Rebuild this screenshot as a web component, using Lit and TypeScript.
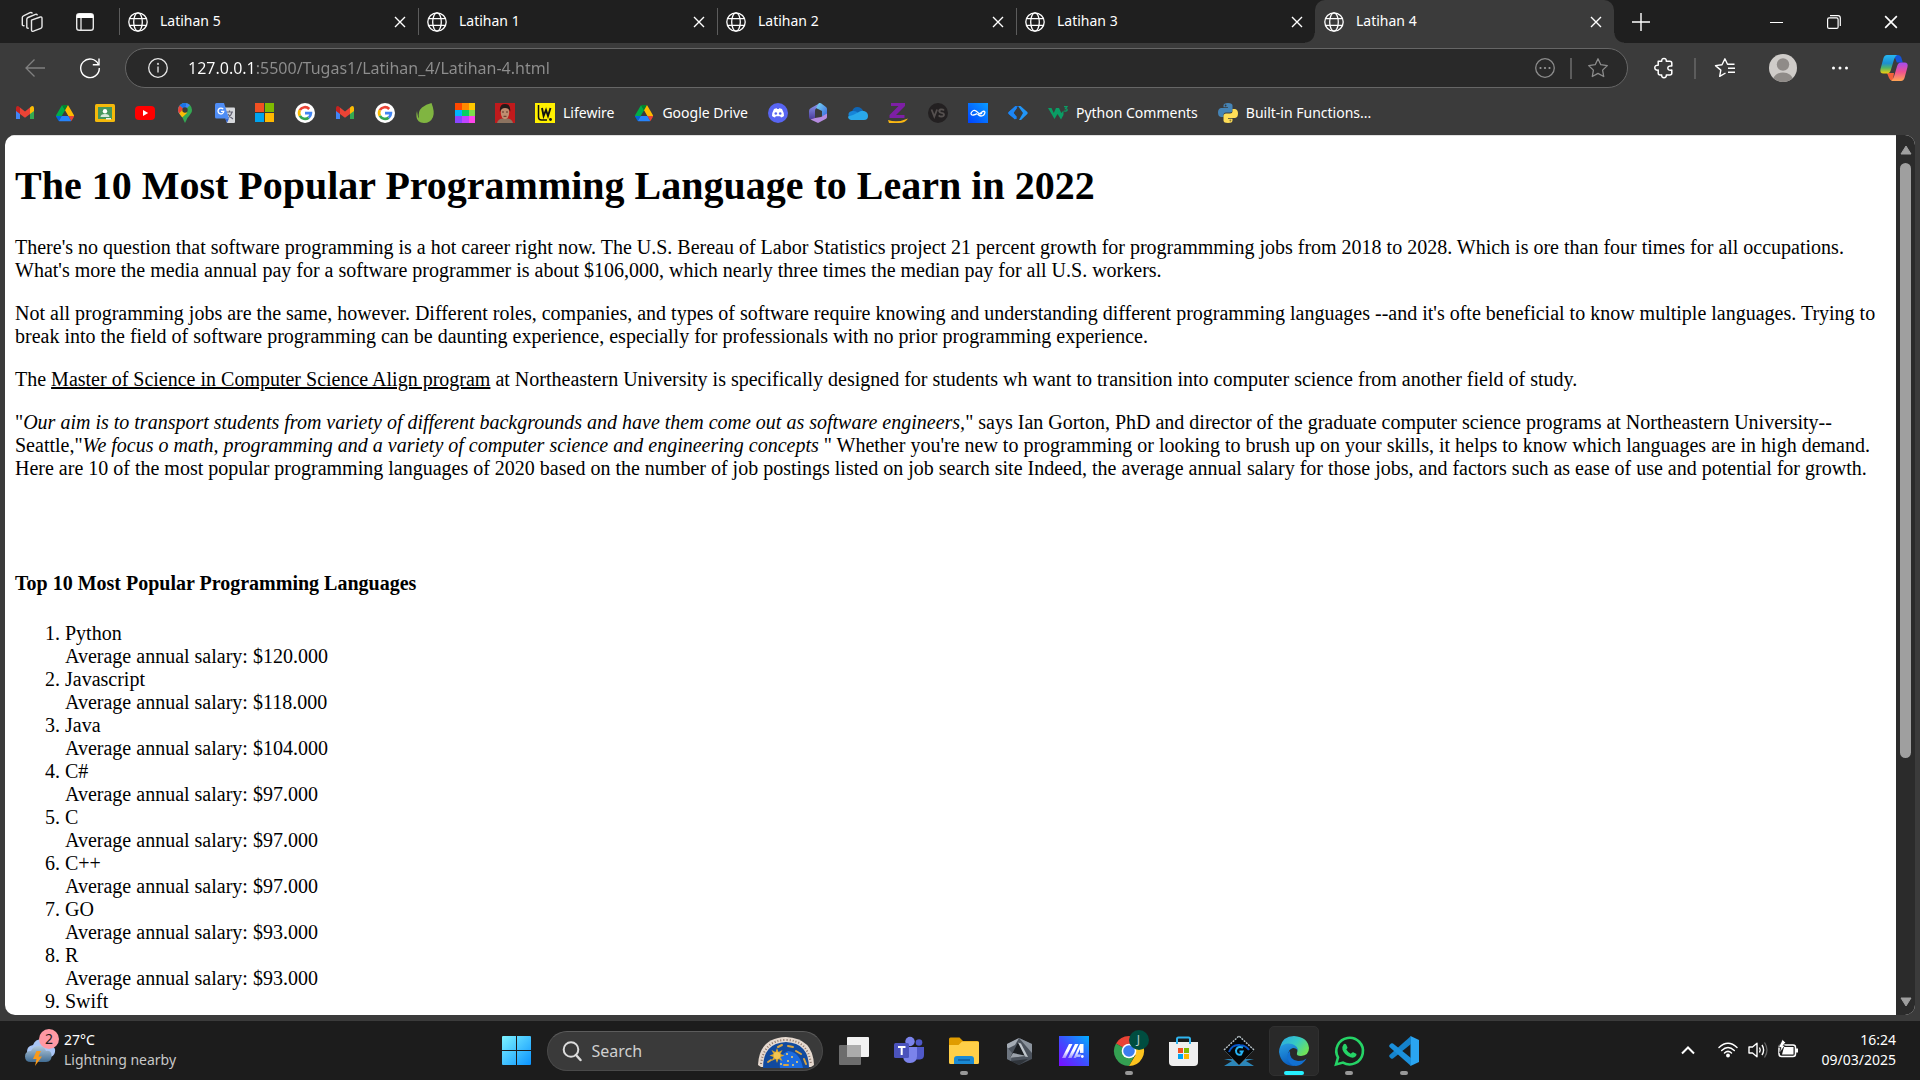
import { LitElement, html, svg, css, nothing, type TemplateResult } from "lit";
import { customElement, property } from "lit/decorators.js";
import { classMap } from "lit/directives/class-map.js";

const icon = (size: number, box: string, body: TemplateResult) =>
  html`<svg width=${size} height=${size} viewBox=${box} fill="none" aria-hidden="true">${body}</svg>`;

/* ---------- browser chrome icons ---------- */

const globe = icon(20, "0 0 20 20", svg`
  <g stroke="#fff" stroke-width="1.3"><circle cx="10" cy="10" r="9.2"/><ellipse cx="10" cy="10" rx="4.3" ry="9.2"/>
  <path d="M1.6 6.6h16.8M1.6 13.4h16.8"/></g>`);

const cross = (size: number) => icon(size, "0 0 12 12", svg`
  <path d="M1 1l10 10M11 1L1 11" stroke="#fff" stroke-width="1.4"/>`);

const workspaces = icon(22, "0 0 22 22", svg`
  <g stroke="#e8e8e8" stroke-width="1.4" stroke-linejoin="round" stroke-linecap="round">
  <path d="M10.5 9.2l8.8-3.2q1.700-.4 1.700 1.200v8.400q0 1.200-1.200 1.700l-7.300 2.900q-2 .6-2-1.200v-8.200z"/>
  <path d="M7.200 17.300q-1.400.1-1.400-1.300V8.200q0-1.200 1.200-1.700l7.500-3.200q1.200-.4 1.700.5"/>
  <path d="M3 14.800q-1.700.1-1.700-1.400V6.500q0-1.200 1.200-1.700l6.600-3.200q1.300-.5 2 .4"/></g>`);

const verticalTabs = icon(20, "0 0 20 20", svg`
  <rect x="1.7" y="1.7" width="16.6" height="16.6" rx="2.6" stroke="#e8e8e8" stroke-width="1.4"/>
  <path d="M1.7 4.3q0-2.6 2.6-2.600h11.400q2.600 0 2.600 2.600V6H1.7z" fill="#fff"/><path d="M6 6v12" stroke="#e8e8e8" stroke-width="1.3"/>`);

const plus = icon(18, "0 0 18 18", svg`<path d="M9 0v18M0 9h18" stroke="#fff" stroke-width="1.4"/>`);
const minimise = icon(14, "0 0 14 14", svg`<path d="M0 7.5h13" stroke="#fff"/>`);
const restore = icon(14, "0 0 14 14", svg`
  <g stroke="#fff" stroke-width="1.2"><rect x=".6" y="2.9" width="10.5" height="10.5" rx="1.5"/><path d="M3 .7h8q2.300 0 2.300 2.300v8"/></g>`);

const back = icon(20, "0 0 20 20", svg`
  <path d="M20 10H1M9.500 1.500L1 10l8.500 8.500" stroke="#808080" stroke-width="1.3"/>`);
const reload = icon(22, "0 0 22 22", svg`
  <path d="M19.500 7.500A9.300 9.300 0 1 0 20.300 11" stroke="#fff" stroke-width="1.4"/><path d="M20 1.500v6.300h-6.200" stroke="#fff" stroke-width="1.4"/>`);
const info = icon(20, "0 0 20 20", svg`
  <circle cx="10" cy="10" r="9.3" stroke="#e8e8e8" stroke-width="1.3"/><path d="M10 8.500v6" stroke="#c8c8c8" stroke-width="1.6"/><circle cx="10" cy="5.9" r="1.1" fill="#c8c8c8"/>`);
const circleDots = icon(20, "0 0 20 20", svg`
  <circle cx="10" cy="10" r="9.3" stroke="#8c8c8c" stroke-width="1.3"/><g fill="#9a9a9a"><circle cx="5.5" cy="10" r="1.1"/><circle cx="10" cy="10" r="1.1"/><circle cx="14.5" cy="10" r="1.1"/></g>`);
const star = icon(22, "0 0 22 22", svg`
  <path d="M11 1.800l2.800 5.900 6.500.9-4.700 4.500 1.100 6.400L11 16.400l-5.700 3.100 1.100-6.400L1.700 8.600l6.500-.9z" stroke="#8c8c8c" stroke-width="1.3" stroke-linejoin="round"/>`);
const puzzle = icon(22, "0 0 22 22", svg`
  <path d="M5.200 4.300h3.500q-.2-2.900 2.300-2.900t2.300 2.900h3.500q2 0 2 2v2.800q-4-.6-4 2t4 2v3q0 2-2 2h-3.500q.2 2.600-2.300 2.600t-2.300-2.600H7.200q-2 0-2-2v-3q-3.400.3-3.400-2.400t3.400-2.400z" stroke="#fff" stroke-width="1.5" stroke-linejoin="round"/>`);
const favourites = icon(22, "0 0 22 22", svg`
  <path d="M11.500 16l-5.800 3.300 1.100-6.200L1.500 8.600l6.500-.9L10.900 1.800l2.600 5.400h7M14 11.300h7M14 15.300h7" stroke="#fff" stroke-width="1.4" stroke-linejoin="round"/>`);
const avatar = icon(28, "0 0 28 28", svg`
  <clipPath id="av"><circle cx="14" cy="14" r="14"/></clipPath>
  <g clip-path="url(#av)"><path fill="#cfccc9" d="M0 0h28v28H0z"/><circle cx="14" cy="10.5" r="6.2" fill="#8f8b88"/><ellipse cx="14" cy="26" rx="10" ry="7.5" fill="#8f8b88"/></g>`);
const dots = icon(20, "0 0 20 20", svg`<g fill="#fff"><circle cx="3.5" cy="10" r="1.5"/><circle cx="10" cy="10" r="1.5"/><circle cx="16.5" cy="10" r="1.5"/></g>`);
const copilot = icon(28, "0 0 28 28", svg`
  <defs><linearGradient id="cpA" x1="0" y1="0" x2="0" y2="1"><stop stop-color="#26b8f2"/><stop offset=".45" stop-color="#1d8fd0"/><stop offset=".7" stop-color="#52b565"/><stop offset="1" stop-color="#f5cf0a"/></linearGradient>
  <linearGradient id="cpB" x1="0" y1="0" x2="0" y2="1"><stop stop-color="#a14cf0"/><stop offset=".5" stop-color="#ee5091"/><stop offset="1" stop-color="#ffa553"/></linearGradient></defs>
  <path d="M14 1h4q2.500 0 3.300 2.500l1.500 5h-6z" fill="#1554d8"/>
  <path d="M7 19h7l-1 7.500q-3 .2-4-2.500z" fill="#f2603a"/>
  <path d="M7 1h10q-2 1-3 4.500l-3 10Q10 19.500 7 19.500H3.500q-4 0-3-4.500L3.500 4Q4.500 1 7 1z" fill="url(#cpA)"/>
  <path d="M21 27H11q2-1 3-4.500l3-10Q18 8.500 21 8.500h3.500q4 0 3 4.500l-3 11Q23.500 27 21 27z" fill="url(#cpB)"/>`);

/* ---------- bookmark icons ---------- */

const gmail = svg`
  <path d="M1 5v11h4V9z" fill="#4285f4"/><path d="M15 9v7h4V5z" fill="#34a853"/><path d="M15 4.500V11l4-3V5q-.3-2.500-2.500-1.700z" fill="#fbbc04"/>
  <path d="M5 4.500V11L1 8V5q.3-2.500 2.500-1.700z" fill="#c5221f"/><path d="M5 4.500l5 3.900 5-3.900V11l-5 3.800L5 11z" fill="#ea4335"/>`;
const drive = svg`<g transform="translate(1 2) scale(.207)">
  <path d="M6.600 66.850l3.850 6.650c.8 1.400 1.950 2.500 3.300 3.300L27.500 53H0c0 1.550.4 3.100 1.200 4.500z" fill="#0066da"/>
  <path d="M43.650 25L29.900 1.200c-1.350.8-2.500 1.900-3.300 3.300l-25.400 44A9.060 9.060 0 0 0 0 53h27.500z" fill="#00ac47"/>
  <path d="M73.550 76.800c1.350-.8 2.500-1.900 3.300-3.300l1.600-2.750L86.100 57.500c.8-1.400 1.200-2.950 1.200-4.500H59.800l5.850 11.500z" fill="#ea4335"/>
  <path d="M43.650 25L57.400 1.200C56.050.4 54.500 0 52.900 0H34.400c-1.600 0-3.150.45-4.500 1.200z" fill="#00832d"/>
  <path d="M59.800 53H27.500L13.750 76.800c1.350.8 2.900 1.200 4.500 1.200h50.800c1.600 0 3.150-.45 4.500-1.200z" fill="#2684fc"/>
  <path d="M73.400 26.500l-12.700-22c-.8-1.400-1.950-2.500-3.300-3.300L43.650 25 59.800 53h27.450c0-1.550-.4-3.100-1.200-4.500z" fill="#ffba00"/></g>`;
const googleG = svg`
  <circle cx="10" cy="10" r="10" fill="#fff"/><g stroke-width="2.7"><path d="M14.200 6A5.900 5.900 0 0 0 4.800 7.200" stroke="#ea4335"/><path d="M4.800 7.200A5.900 5.900 0 0 0 4.900 12.900" stroke="#fbbc04"/>
  <path d="M4.900 12.900A5.900 5.900 0 0 0 13.700 14.600" stroke="#34a853"/><path d="M10 10.200h5.900A5.900 5.900 0 0 1 13.700 14.600" stroke="#4285f4"/></g>`;
const classroom = svg`
  <rect y="1" width="20" height="18" rx="1.5" fill="#f4b90b"/><path fill="#45975c" d="M3 4h14v12H3z"/><circle cx="10" cy="8.2" r="2.2" fill="#fff"/>
  <path d="M5.500 14q0-3 4.500-3t4.500 3z" fill="#d7e9dc"/><path d="M11 15h5v1.500h-5z" fill="#e8f2ea"/>`;
const youtube = svg`<rect y="3" width="20" height="14" rx="4" fill="#f00"/><path d="M8 7l5.200 3L8 13z" fill="#fff"/>`;
const maps = svg`
  <clipPath id="pin"><path d="M10 0a7 7 0 0 1 7 7c0 4-4 6-5.500 10L10 20l-1.500-3C7.500 13 3 11 3 7a7 7 0 0 1 7-7z"/></clipPath>
  <g clip-path="url(#pin)"><path fill="#34a853" d="M0 0h20v20H0z"/><path d="M2 15L17 0v-2H6L2 2z" fill="#4285f4"/><path d="M0 3l4.500-.5L9 6l-6 6z" fill="#ea4335"/><path d="M4 1.500L8.500 5.500 11 3V-1H7z" fill="#1a73e8"/><path d="M2.500 12.500L9 5l3 5-6.500 6z" fill="#fbbc04"/></g><circle cx="10" cy="7" r="2.7" fill="#3b3b3b"/>`;
const translate = svg`
  <path d="M7 4.500h12q1 0 1 1v13.500q0 1-1 1h-7z" fill="#d7d9dd"/><path d="M11 9h7M14.500 7.500V9M17 9q-.8 4-4.500 6M13 11q1.500 3 5 5" stroke="#667" stroke-width="1.2"/>
  <path d="M1.500 0H9l5 15.500H1.500Q0 15.500 0 14V1.500Q0 0 1.500 0z" fill="#4f8df5"/><path d="M12 20l-2-4.500h4z" fill="#3367d6"/><path d="M8.200 6.200A2.900 2.900 0 1 0 8.800 8.300H6" stroke="#fff" stroke-width="1.3"/>`;
const windowsLogo = svg`<path fill="#f25022" d="M0 0h9v9H0z"/><path fill="#7fba00" d="M10 0h9v9h-9z"/><path fill="#00a4ef" d="M0 10h9v9H0z"/><path fill="#ffb900" d="M10 10h9v9h-9z"/>`;
const leaf = svg`<path d="M16.500 0Q20 9 18 14q-2.500 6-9 6-7-.5-7.500-6-.5-3 .5-6 .8 6 2 7.500Q2.500 8.500 7 4.500 11 1 16.500 0z" fill="#80b541"/>`;
const palette = svg`
  <path fill="#ff4800" d="M0 0h7v7H0z"/><path fill="#ff8a00" d="M7 0h7v7H7z"/><path fill="#ffc800" d="M14 0h6v7h-6z"/><path fill="#00b4ff" d="M0 7h7v6H0z"/><path fill="#05d162" d="M7 7h7v6H7z"/>
  <path fill="#7de04a" d="M14 7h6v6h-6z"/><path fill="#8a45ff" d="M0 13h7v7H0z"/><path fill="#c044ff" d="M7 13h7v7H7z"/><path fill="#ff45ea" d="M14 13h6v7h-6z"/>`;
const portrait = svg`
  <path fill="#c01a1c" d="M0 0h20v20H0z"/><path d="M2 20q1-4 5-4.500h6q4 .5 5 4.500z" fill="#8c7360"/><ellipse cx="10" cy="9.5" rx="4.2" ry="6.8" fill="#c08d70"/>
  <path d="M5 9Q4 1 10 1t5.200 7.500Q14 5 10 5T5 9z" fill="#241b19"/><path d="M7 9h2M11 9h2M8.500 13.300h3" stroke="#5a3428"/>`;
const lifewire = svg`
  <path fill="#fff000" d="M0 0h20v20H0z"/><path d="M3.500 2v12q0 3 3 3h5.500" stroke="#111" stroke-width="1.5"/><path d="M7 5l1.600 8L11 7l2 6 2.500-8" stroke="#111" stroke-width="1.9"/><circle cx="15.5" cy="16.5" r="1.4" fill="#111"/>`;
const discord = svg`
  <circle cx="10" cy="10" r="10" fill="#5865f2"/><path d="M6 6q2-1 2.800-.8l.4.8h1.600l.4-.8Q12 5 14 6q2 3.500 2 7-1.500 1.300-3 1.500l-.8-1.200H7.800L7 14.500q-1.500-.2-3-1.500 0-3.500 2-7z" fill="#fff"/><g fill="#5865f2"><circle cx="7.8" cy="10.5" r="1.3"/><circle cx="12.2" cy="10.5" r="1.3"/></g>`;
const m365 = svg`
  <defs><linearGradient id="mA" x1="0" y1="0" x2="0" y2="1"><stop stop-color="#8f9cf5"/><stop offset="1" stop-color="#4a3a98"/></linearGradient><linearGradient id="mB" x1="0" y1="0" x2="1" y2="1"><stop stop-color="#79dcf5"/><stop offset="1" stop-color="#3a66dd"/></linearGradient></defs>
  <path d="M12 0L3 5Q1 6 1 8v6q0 2 2 2.500l4-1.500V8q0-2 1.500-3z" fill="url(#mA)"/><path d="M11 0q1-.3 2 .3L18 4q1 .8 1 2v8l-5-1V8l-6-3z" fill="url(#mB)"/><path d="M2.500 16.500L7 15l6-1 6-3.500V14q0 1-1 1.800L11 19.600q-1 .6-2 0z" fill="#b58be0"/>`;
const onedrive = svg`
  <path d="M4 9q1-5 5.500-5Q13 4 15 7.500L8 13z" fill="#1066b5"/><path d="M1 14q-2-5 3-6 3-.4 5 1l4 4z" fill="#1684d8"/><path d="M3 17q-3-1-3-3.500Q6 12 10 9.500 13 7 16 8q4 1 4 5t-4 4z" fill="#29a8ea"/>`;
const zed = svg`<path d="M3 0h14v3L8 12h8.500v3H1.500v-3l9-9H3z" fill="#7d1fa5"/><path d="M0 17q10 3 20-1.500-3 4.500-9 4.500H1z" fill="#fbb812"/>`;
const versus = svg`<circle cx="10" cy="10" r="10" fill="#232021"/><path d="M3.500 6.500l2.800 7 2.800-7M16 7.500q-1-1.200-3-1-2 .3-1.800 1.800.3 1.200 2.300 1.500 2.500.3 2.500 2-.2 1.700-2.500 1.700-1.800 0-2.800-1.200" stroke="#55504f" stroke-width="1.8"/>`;
const wave = svg`
  <linearGradient id="wv" x1="0" y1="1" x2="1" y2="0"><stop stop-color="#0042ff"/><stop offset="1" stop-color="#0a9cff"/></linearGradient><path fill="url(#wv)" d="M0 0h20v20H0z"/>
  <path d="M3 10Q5.500 6 8 8l2.500 2q2 1.500 3.500 0M3 10q0 2.500 2.500 2T9 10.500M17 9q-.5 4-4 4-1.500 0-3.500-2M17 9q-1-1.500-3 0l-2 1.500" stroke="#fff" stroke-width="1.3"/>`;
const brackets = svg`<path d="M7.500 3h2.500L5.500 9.500 9 16H7L.7 11q-.9-1 0-2z" fill="#1478f0"/><path d="M12.500 3H10l5 7-4 7h2l6.300-6q.9-1 0-2z" fill="#2196f8"/><path d="M7.500 3L.7 9q-.9 1 0 2L7 16.500 9 14 5.500 10 9 5z" fill="#1d86f5"/>`;
const w3 = svg`<path d="M0 5h3.500l2.300 5L8 5h3l2.300 5L15.500 7.500V12L13 16.500 9.500 11 6.500 16z" fill="#0a9d64"/><path d="M16 3.700h3l-1.500 2q1.800 0 1.700 1.300t-3.200 1" stroke="#0a9d64" stroke-width="1.2"/>`;
const python = svg`
  <path d="M10 0q4.500 0 4.500 2.500V7q0 2.500-2.500 2.500H8Q5.500 9.500 5.500 12v2H3q-3-.5-3-4.500T3 5h7V4.300H5.500V2.500Q5.500 0 10 0z" fill="#4584b6"/>
  <path d="M10 20q-4.500 0-4.500-2.500V13q0-2.500 2.500-2.500h4q2.500 0 2.500-2.500V6H17q3 .5 3 4.500t-3 4.500h-7v.7h4.500v1.800q0 2.500-4.500 2.500z" fill="#ffde57"/><circle cx="7.6" cy="2.5" r=".9" fill="#3b3b3b"/><circle cx="12.4" cy="17.5" r=".9" fill="#8a7a3a"/>`;

interface Bookmark { name: string; art: TemplateResult; label?: string; }
const BOOKMARKS: Bookmark[] = [
  { name: "Gmail", art: gmail }, { name: "Drive", art: drive }, { name: "Classroom", art: classroom },
  { name: "YouTube", art: youtube }, { name: "Maps", art: maps }, { name: "Translate", art: translate },
  { name: "Microsoft", art: windowsLogo }, { name: "Google", art: googleG }, { name: "Gmail", art: gmail },
  { name: "Google", art: googleG }, { name: "Envato", art: leaf }, { name: "Colours", art: palette },
  { name: "Portrait", art: portrait }, { name: "Lifewire", art: lifewire, label: "Lifewire" },
  { name: "Google Drive", art: drive, label: "Google Drive" }, { name: "Discord", art: discord },
  { name: "Microsoft 365", art: m365 }, { name: "OneDrive", art: onedrive }, { name: "Z", art: zed },
  { name: "VS", art: versus }, { name: "Wave", art: wave }, { name: "Code", art: brackets },
  { name: "Python Comments", art: w3, label: "Python Comments" },
  { name: "Built-in Functions", art: python, label: "Built-in Functions..." },
];

/* ---------- taskbar icons ---------- */

const weather = icon(36, "0 0 36 36", svg`
  <defs><linearGradient id="wc" x1="0" y1="0" x2="0" y2="1"><stop stop-color="#b3c9dc"/><stop offset="1" stop-color="#416c92"/></linearGradient></defs>
  <path d="M2 22q-1-8 6-9 2-6 9-6 7 .5 9 7 5 1 4 6-1 5-6 5H7z" fill="#a9c6f6"/><path d="M6 30q-6 0-6-5.500T6 19q2-5 8-5 5 0 7 5 5-1 5.500 4 .5 7-5.500 7z" fill="url(#wc)"/>
  <path d="M11.500 19l-3.500 8h3.500L10 34l7-9.500h-3.500L16 19z" fill="#f99a1c"/>`);
const start = icon(29, "0 0 29 29", svg`
  <linearGradient id="st" x1="0" y1="0" x2="29" y2="29" gradientUnits="userSpaceOnUse"><stop stop-color="#7df3ff"/><stop offset="1" stop-color="#0a93ff"/></linearGradient>
  <path d="M1 0h13v14H0V1q0-1 1-1zM15 0h13q1 0 1 1v13H15zM0 15h14v14H1q-1 0-1-1zM15 15h14v13q0 1-1 1H15z" fill="url(#st)"/>`);
const search = icon(20, "0 0 20 20", svg`<circle cx="9" cy="8.5" r="7.3" stroke="#dcdcdc" stroke-width="2"/><path d="M14 14l4.500 5" stroke="#dcdcdc" stroke-width="2.5" stroke-linecap="round"/>`);
const zodiac = html`<svg class="zodiac" width="56" height="32" viewBox="0 0 56 32" fill="none" aria-hidden="true">
  <path d="M0 28Q1 1 28 0q27 1 28 28l-3 2H3z" fill="#e6d9cf"/><path d="M3 27Q6 3 28 3t25 24" stroke="#8c7468" stroke-dasharray="1 2" stroke-width="2"/>
  <path d="M5 31Q5 6 28 5q23 1 23 26z" fill="#124a9e"/><path d="M22 31q-2-13 8-17 12 1 15 17z" fill="#1b6be0"/>
  <path d="M19 11l1.500 4 4-2-2 4 4 1.500-4 1.500 2 4-4-2-1.500 4-1.500-4-4 2 2-4-4-1.500 4-1.500-2-4 4 2z" fill="#d9a62e"/><circle cx="19" cy="18.5" r="3.4" fill="#f2c552"/>
  <g stroke="#d9a541" stroke-width="2" stroke-linecap="round"><path d="M20 10l4-2M30 9l5 1M38 14l5 3M46 22l2 5M10 25l3-2M26 28h4"/></g>
  <g fill="#f4cf68"><circle cx="29" cy="17" r="1"/><circle cx="34" cy="20" r="1"/><circle cx="39" cy="25" r="1"/><circle cx="30" cy="24" r="1"/><circle cx="35" cy="28" r="1"/><circle cx="23" cy="27" r="1"/></g></svg>`;

const taskView = svg`<rect x="8" y="1" width="22" height="20" rx="1" fill="#f2f2f2"/><rect y="9" width="22" height="20" rx="1" fill="#6d6d6d"/><path fill="#acacac" d="M8 9h14v12H8z"/>`;
const teams = svg`
  <circle cx="16" cy="5.5" r="4.7" fill="#7b83eb"/><circle cx="25" cy="6.5" r="3.3" fill="#5059c9"/><path d="M20 11h10v8q0 4-4 4.500h-4z" fill="#5059c9"/><path d="M9 11h14v9q0 7-7 7-6 0-7-6z" fill="#7b83eb"/>
  <rect y="7" width="15" height="15" rx="1.5" fill="#4b53bc"/><path d="M4 11h7.500M7.700 11v8" stroke="#fff" stroke-width="2"/>`;
const explorer = svg`
  <path d="M0 3q0-1.500 1.500-1.500h9L14 5h14q2 0 2 2v4H0z" fill="#e09c00"/><path d="M0 9h9.500L13 5.500h16q1 0 1 1.500v19.500q0 1.500-1.500 1.500h-27Q0 28 0 26.500z" fill="#ffcf48"/>
  <path d="M5 28v-5q0-3 3-3h14q3 0 3 3v5z" fill="#1a8ad4"/><path d="M9 24h12" stroke="#0c5a9c" stroke-width="1.5"/>`;
const armoury = svg`
  <path d="M15 2l13 6v15l-13 6L3 23V8z" fill="#4b525c"/><path d="M15 2L3 8v5l8-4z" fill="#a4abb4"/><path d="M3 11v12l4 2 1-8z" fill="#6d757f"/><path d="M15 2l13 6v9z" fill="#8b939d"/>
  <path d="M14 6.500L6 22l17-2z" fill="#1b1e22"/><path d="M14 6.500l3 1 7 13.500-3-.5z" fill="#c1c7cd"/><path d="M6 22l17-2-14-3z" fill="#9aa1aa"/><path d="M7 25l17-2-9 6z" fill="#2f343a"/>`;
const myasus = svg`
  <linearGradient id="ma" x1="0" y1="1" x2="1" y2="0"><stop stop-color="#7a0cff"/><stop offset=".5" stop-color="#3c50ff"/><stop offset="1" stop-color="#00b0ff"/></linearGradient><path fill="url(#ma)" d="M0 0h30v30H0z"/>
  <linearGradient id="mw" x1="0" y1="1" x2="0" y2="0"><stop stop-color="#fff" stop-opacity=".45"/><stop offset=".5" stop-color="#fff"/></linearGradient>
  <path d="M3 22L10 8h3.500L6.500 22zM9 22l7-14h3.500l-7 14zM14.500 22l6.500-14h3.500v9H21v-4l-2.500 5.500H22L21 21h-3.500l-.5 1z" fill="url(#mw)"/><circle cx="23.3" cy="20.5" r="1.4" fill="#fff"/>`;
const chrome = svg`
  <path d="M15 15L2 7.500A15 15 0 0 1 28 7.500z" fill="#ea4335"/><path d="M15 15L2 7.500A15 15 0 0 0 15 30l6-11z" fill="#34a052"/><path d="M15 15L28 7.500A15 15 0 0 1 15 30l6.500-11z" fill="#fcc31e"/>
  <path d="M15 8h13.300q1.700 3 1.700 7H15z" fill="#fcc31e"/><circle cx="15" cy="15" r="7.3" fill="#fff"/><circle cx="15" cy="15" r="5.8" fill="#3c7df0"/>`;
const store = svg`
  <path d="M8 8V3q0-1.500 1.500-1.500h10Q21 1.500 21 3v5" stroke="#2fb4ee" stroke-width="2"/><path d="M0 6h29v20q0 4-4 4H4q-4 0-4-4z" fill="#efefef"/>
  <path d="M8 6v2M21 6v2" stroke="#2fb4ee" stroke-width="2"/><path fill="#f25022" d="M9 12h5v5H9z"/><path fill="#7fba00" d="M15 12h5v5h-5z"/><path fill="#00a4ef" d="M9 18h5v5H9z"/><path fill="#ffb900" d="M15 18h5v5h-5z"/>`;
const ghelper = svg`
  <path d="M0 23l8 2-8 5h30l-8-5 8-2z" fill="#2c86b8"/><path d="M15 0l15 14-15 15L0 14z" fill="#050708"/><path d="M0 14L15 0l15 14" stroke="#b9c3c8" stroke-width="1.4" stroke-dasharray="2 1"/><path d="M0 14l15 15 15-15" stroke="#3b464b"/>
  <path d="M5 16q3-8 11-7 6 .5 9 5" stroke="#0a55c8" stroke-width="2"/><path d="M19 11.500q-6-2-7 3 0 5 5 4l1.500-3H15.500" stroke="#26b4f5" stroke-width="2"/>`;
const edge = svg`
  <defs><linearGradient id="eA" x1="0" y1="0" x2="1" y2=".6"><stop stop-color="#2aa6e4"/><stop offset=".55" stop-color="#36c9c4"/><stop offset="1" stop-color="#6fe25a"/></linearGradient>
  <linearGradient id="eB" x1="0" y1="0" x2=".3" y2="1"><stop stop-color="#29a0e2"/><stop offset="1" stop-color="#0b5fc0"/></linearGradient></defs>
  <path d="M1 11Q4 0 15 0q14 1 15 12 0 7.500-8 8-5 0-4-3 2-5-4-7Q6 8 1 11z" fill="url(#eA)"/><path d="M1 11Q6 6 13 8q6 2 6 7-1.500-3-5-3-5 1-5 8 1 8 8 10h-3Q2 29 0 16q0-3 1-5z" fill="url(#eB)"/>
  <path d="M11 15q-1 9 8 10 5 .3 8.500-2.500Q24 29 17 30q-7-.5-9-9 0-4 3-6z" fill="#1270d0"/>`;
const whatsapp = svg`
  <path d="M2 28.500l2-7A13.300 13.300 0 1 1 9 26.600z" stroke="#25d366" stroke-width="2.6"/><path d="M9.500 8.500q1.300-1.500 2.500-.3l1.500 3q.2 1-1.200 2.300 1.700 3 4.500 4.300 1.500-2 2.400-1.600l3 1.500q.8.7-.2 2.300-2 2.500-5.500 1.300-6-2-8-7.500-.8-3 1-5.300z" fill="#25d366"/>`;
const vscode = svg`
  <path d="M21.500 0L30 4v22l-8.500 4z" fill="#2aa5f2"/><path d="M22 0v8L4 22.500q-1 .7-2 0L.5 21q-.8-1 0-2z" fill="#1583cc"/><path d="M22 30v-8L4 7.500q-1-.7-2 0L.5 9q-.8 1 0 2z" fill="#1b90dc"/>`;

interface App { name: string; art: TemplateResult; state?: "open" | "active"; badge?: string; }
const APPS: App[] = [
  { name: "Task view", art: taskView }, { name: "Teams", art: teams },
  { name: "File Explorer", art: explorer, state: "open" }, { name: "Armoury Crate", art: armoury },
  { name: "MyASUS", art: myasus }, { name: "Chrome", art: chrome, state: "open", badge: "J" },
  { name: "Store", art: store }, { name: "G-Helper", art: ghelper },
  { name: "Edge", art: edge, state: "active" }, { name: "WhatsApp", art: whatsapp, state: "open" },
  { name: "Visual Studio Code", art: vscode, state: "open" },
];

const chevron = icon(16, "0 0 16 16", svg`<path d="M2 11.500L8 5.500l6 6" stroke="#fff" stroke-width="2"/>`);
const wifi = icon(20, "0 0 20 20", svg`<g stroke="#fff" stroke-width="1.5" stroke-linecap="round"><path d="M1 7.500q9-8.500 18 0M3.700 10.500q6.300-6 12.600 0M6.500 13q3.500-3.200 7 0"/></g><circle cx="10" cy="15.5" r="1.9" fill="#fff"/>`);
const volume = icon(20, "0 0 20 20", svg`
  <path d="M1 7h3.500L9 3.200v13.600L4.500 13H1z" stroke="#fff" stroke-width="1.4" stroke-linejoin="round"/><path d="M11.500 7.500q1.500 2.500 0 5M14 5q3.200 5 0 10" stroke="#fff" stroke-width="1.4"/><path d="M16.500 2.500q5 7.500 0 15" stroke="#666" stroke-width="1.3"/>`);
const battery = icon(20, "0 0 20 20", svg`
  <rect x="1" y="5" width="16.5" height="11.5" rx="2.5" stroke="#fff" stroke-width="1.5"/><path d="M4 14.500L6 7h9.500v7.500zM18 8.500h2v4h-2z" fill="#fff"/><path d="M4.500-.5L.5 7.500H3L1.500 13l5.500-7.500H5l2.500-3z" fill="#fff" stroke="#1c1c1c" stroke-width=".6"/>`);

const scrollArrow = (d: string) => html`<svg width="12" height="10" viewBox="0 0 12 10"><path d=${d} fill="#9f9f9f" stroke="#9f9f9f" stroke-linejoin="round"/></svg>`;

/* ---------- elements ---------- */

const reset = css`
  * { box-sizing: border-box; }
  svg { display: block; flex: none; overflow: visible; }
  button { font: inherit; color: inherit; background: none; border: 0; padding: 0; margin: 0; display: grid; place-items: center; }
  a { color: inherit; text-decoration: none; }
`;

@customElement("browser-tabs")
class BrowserTabs extends LitElement {
  @property({ type: Array }) tabs: string[] = [];
  @property() active = "";
  static styles = [reset, css`
    :host { display: flex; height: 43px; padding-right: 1px; background: #1f1f1f; color: #fff; }
    .lead { display: flex; width: 119px; padding-left: 5px; }
    .lead button { width: 53px; }
    .tabs { display: flex; flex: 0 1 1495px; min-width: 0; }
    .tab { position: relative; flex: 1; display: flex; align-items: center; padding: 0 10px 0 8px; border-left: 1px solid transparent; border-image: linear-gradient(transparent 9px, #5c5c5c 9px, #5c5c5c 34px, transparent 34px) 1; min-width: 0; }
    .tab > button:first-child { flex: 1; display: flex; align-items: center; gap: 12px; height: 43px; min-width: 0; text-align: left; }
    .label { line-height: 20px; padding-bottom: 2px; }
    .tab.on { background: #3b3b3b; border-image: none; border-radius: 10px 10px 0 0; }
    .tab.on::before, .tab.on::after { content: ""; position: absolute; bottom: 0; width: 10px; height: 10px; }
    .tab.on::before { left: -11px; background: radial-gradient(circle at 0 0, transparent 9px, #3b3b3b 10px); }
    .tab.on::after { right: -10px; background: radial-gradient(circle at 100% 0, transparent 9px, #3b3b3b 10px); }
    .close { width: 16px; height: 24px; }
    .new { width: 54px; }
    .window { display: flex; margin-left: auto; }
    .window button { width: 57px; }
  `];
  render() {
    return html`
      <div class="lead"><button aria-label="Workspaces">${workspaces}</button><button aria-label="Tab actions">${verticalTabs}</button></div>
      <div class="tabs">${this.tabs.map((t) => html`
        <div class=${classMap({ tab: true, on: t === this.active })}>
          <button>${globe}<span class="label">${t}</span></button>
          <button class="close" aria-label="Close ${t}">${cross(12)}</button>
        </div>`)}</div>
      <button class="new" aria-label="New tab">${plus}</button>
      <div class="window">
        <button aria-label="Minimise">${minimise}</button><button aria-label="Restore">${restore}</button><button aria-label="Close window">${cross(14)}</button>
      </div>`;
  }
}

@customElement("browser-toolbar")
class BrowserToolbar extends LitElement {
  static styles = [reset, css`
    :host { display: flex; align-items: center; height: 50px; padding-left: 7px; background: #3b3b3b; color: #fff; }
    .nav { width: 55px; height: 40px; }
    .address { flex: 1; min-width: 0; display: flex; align-items: center; height: 40px; margin-left: 8px; padding: 0 4px 0 2px; border: 1px solid #666; border-radius: 20px; background: #292929; }
    .info { width: 60px; height: 38px; }
    .url { flex: 1; min-width: 0; height: 32px; border: 0; outline: 0; padding: 0 0 1px; font: inherit; font-size: 16px; color: transparent;
      background: linear-gradient(to right, #fff 67px, #8e8e8e 67px); -webkit-background-clip: text; background-clip: text; }
    .field { width: 51px; height: 38px; }
    .rule { width: 2px; height: 21px; background: #5c5c5c; }
    .ext { width: 61px; height: 40px; }
    .fav { width: 58px; height: 40px; }
    .tail { display: flex; align-items: center; padding-left: 5px; }
    .tail button { height: 40px; }
    .more { width: 55px; }
    .pilot { width: 53px; }
  `];
  render() {
    return html`
      <button class="nav" aria-label="Back">${back}</button>
      <button class="nav" aria-label="Reload">${reload}</button>
      <div class="address">
        <button class="info" aria-label="Site information">${info}</button>
        <input class="url" aria-label="Address" value="127.0.0.1:5500/Tugas1/Latihan_4/Latihan-4.html">
        <button class="field" aria-label="Page actions">${circleDots}</button><span class="rule"></span>
        <button class="field" aria-label="Favourite this page">${star}</button>
      </div>
      <div class="tail">
        <button class="ext" aria-label="Extensions">${puzzle}</button><span class="rule"></span>
        <button class="fav" aria-label="Favourites">${favourites}</button>
        <button class="fav" aria-label="Profile">${avatar}</button>
        <button class="more" aria-label="Settings">${dots}</button>
        <button class="pilot" aria-label="Copilot">${copilot}</button>
      </div>`;
  }
}

@customElement("bookmark-bar")
class BookmarkBar extends LitElement {
  static styles = [reset, css`
    :host { display: flex; height: 42px; padding: 0 5px; background: #3b3b3b; color: #fff; }
    a { display: flex; align-items: center; gap: 8px; height: 40px; padding: 0 10px; white-space: nowrap; }
    span { line-height: 20px; padding-bottom: 1px; }
  `];
  render() {
    return BOOKMARKS.map((b) => html`<a href="#" aria-label=${b.name}>${icon(20, "0 0 20 20", b.art)}${b.label ? html`<span>${b.label}</span>` : nothing}</a>`);
  }
}

const LANGUAGES: [string, string?][] = [
  ["Python", "$120.000"], ["Javascript", "$118.000"], ["Java", "$104.000"], ["C#", "$97.000"], ["C", "$97.000"],
  ["C++", "$97.000"], ["GO", "$93.000"], ["R", "$93.000"], ["Swift"],
];

@customElement("article-page")
class ArticlePage extends LitElement {
  static styles = [reset, css`
    :host { display: flex; min-height: 0; overflow: hidden; border-radius: 10px; background: #fff; color: #000; font: 20px/23px "Liberation Serif", "Times New Roman", serif; }
    article { flex: 1; min-width: 0; padding: 27px 10px 0; border-top: 1px solid #e0e0e0; }
    h1 { margin: 0 0 27px; font-size: 40px; line-height: 46px; }
    p { margin: 0 0 20px; }
    a { text-decoration: underline; }
    h4 { margin: 92px 0 27px; font-size: 20px; }
    ol { margin: 0; padding-left: 50px; }
    li span { display: block; }
    .scroll { display: flex; flex-direction: column; align-items: center; width: 19px; padding: 10px 0 8px; background: #2b2b2b; }
    .track { flex: 1; width: 11px; padding: 8px 0; }
    .thumb { height: 72%; border-radius: 6px; background: #9f9f9f; }
  `];
  render() {
    return html`
      <article>
        <h1>The 10 Most Popular Programming Language to Learn in 2022</h1>
        <p>There's no question that software programming is a hot career right now. The U.S. Bereau of Labor Statistics project 21 percent growth for programmming jobs from 2018 to 2028. Which is ore than four times for all occupations. What's more the media annual pay for a software programmer is about $106,000, which nearly three times the median pay for all U.S. workers.</p>
        <p>Not all programming jobs are the same, however. Different roles, companies, and types of software require knowing and understanding different programming languages --and it's ofte beneficial to know multiple languages. Trying to break into the field of software programming can be daunting experience, especially for professionals with no prior programming experience.</p>
        <p>The <a href="#">Master of Science in Computer Science Align program</a> at Northeastern University is specifically designed for students wh want to transition into computer science from another field of study.</p>
        <p>"<i>Our aim is to transport students from variety of different backgrounds and have them come out as software engineers,</i>" says Ian Gorton, PhD and director of the graduate computer science programs at Northeastern University--Seattle,"<i>We focus o math, programming and a variety of computer science and engineering concepts </i>" Whether you're new to programming or looking to brush up on your skills, it helps to know which languages are in high demand. Here are 10 of the most popular programming languages of 2020 based on the number of job postings listed on job search site Indeed, the average annual salary for those jobs, and factors such as ease of use and potential for growth.</p>
        <h4>Top 10 Most Popular Programming Languages</h4>
        <ol>${LANGUAGES.map(([name, pay]) => html`<li>${name}${pay ? html`<span>Average annual salary: ${pay}</span>` : nothing}</li>`)}</ol>
      </article>
      <div class="scroll" aria-hidden="true">
        ${scrollArrow("M6 1l5 8H1z")}
        <div class="track"><div class="thumb"></div></div>
        ${scrollArrow("M6 9L1 1h10z")}
      </div>`;
  }
}

@customElement("task-bar")
class TaskBar extends LitElement {
  static styles = [reset, css`
    :host { display: grid; grid-template-columns: 1fr auto 1fr; align-items: center; height: 59px; background: #1c1c1c; color: #fff; line-height: 20px; }
    .weather { display: flex; gap: 9px; justify-self: start; padding: 0 0 2px 25px; text-align: left; }
    .sky { position: relative; width: 30px; height: 36px; }
    .count { position: absolute; left: 14px; top: -3px; width: 20px; height: 20px; border-radius: 50%; background: #ff99a4; color: #1c1c1c; text-align: center; }
    .stack { display: flex; flex-direction: column; }
    .muted { color: #c8c8c8; }
    .apps { display: flex; gap: 5px; }
    .app { position: relative; width: 50px; height: 50px; border-radius: 5px; border: 1px solid transparent; }
    .app.active { background: #292929; border-color: #303030; }
    .app.open::after, .app.active::after { content: ""; position: absolute; bottom: 0; left: 50%; width: 8px; height: 4px; margin-left: -4px; border-radius: 2px; background: #989898; }
    .app.active::after { width: 20px; margin-left: -10px; background: #26f0ff; }
    .badge { position: absolute; right: 4px; top: 3px; width: 20px; height: 20px; border-radius: 50%; background: #004d40; color: #b6c9c4; font-size: 12px; text-align: center; }
    .search { display: flex; align-items: center; gap: 10px; width: 276px; height: 40px; margin: 5px 1px 5px 0; padding: 0 8px 0 14px; border: 1px solid #4a4a4a; border-top-color: #5c5c5c; border-radius: 20px; background: #3a3a3a; }
    .search input { flex: 1; min-width: 0; border: 0; outline: 0; padding: 0; background: none; color: #d0d0d0; font: inherit; font-size: 16px; }
    .search input::placeholder { color: #d0d0d0; }
    .zodiac { align-self: flex-end; margin-bottom: 1px; }
    .tray { display: flex; align-items: center; gap: 10px; justify-self: end; padding: 0 24px 2px 0; }
    .tray .up { margin-right: 12px; }
    .clock { display: flex; flex-direction: column; align-items: flex-end; min-width: 78px; margin-left: 10px; }
  `];
  render() {
    return html`
      <button class="weather"><span class="sky">${weather}<span class="count">2</span></span>
        <span class="stack"><span>27°C</span><span class="muted">Lightning nearby</span></span></button>
      <div class="apps">
        <button class="app" aria-label="Start">${start}</button>
        <label class="search">${search}<input type="text" placeholder="Search" aria-label="Search">${zodiac}</label>
        ${APPS.map((a) => html`<button class=${classMap({ app: true, open: a.state === "open", active: a.state === "active" })} aria-label=${a.name}>
          ${icon(30, "0 0 30 30", a.art)}${a.badge ? html`<span class="badge">${a.badge}</span>` : nothing}</button>`)}
      </div>
      <div class="tray">
        <button class="up" aria-label="Hidden icons">${chevron}</button>
        <button aria-label="Network">${wifi}</button><button aria-label="Volume">${volume}</button><button aria-label="Battery">${battery}</button>
        <button class="clock"><span>16:24</span><span>09/03/2025</span></button>
      </div>`;
  }
}

@customElement("app-root")
class AppRoot extends LitElement {
  static styles = css`
    :host { display: flex; flex-direction: column; height: 100vh; background: #3b3b3b; font: 14px/20px "Noto Sans", "Open Sans", sans-serif; }
    article-page { flex: 1; margin: 0 5px 6px; }
  `;
  render() {
    return html`
      <browser-tabs .tabs=${["Latihan 5", "Latihan 1", "Latihan 2", "Latihan 3", "Latihan 4"]} active="Latihan 4"></browser-tabs>
      <browser-toolbar></browser-toolbar>
      <bookmark-bar></bookmark-bar>
      <article-page></article-page>
      <task-bar></task-bar>`;
  }
}
